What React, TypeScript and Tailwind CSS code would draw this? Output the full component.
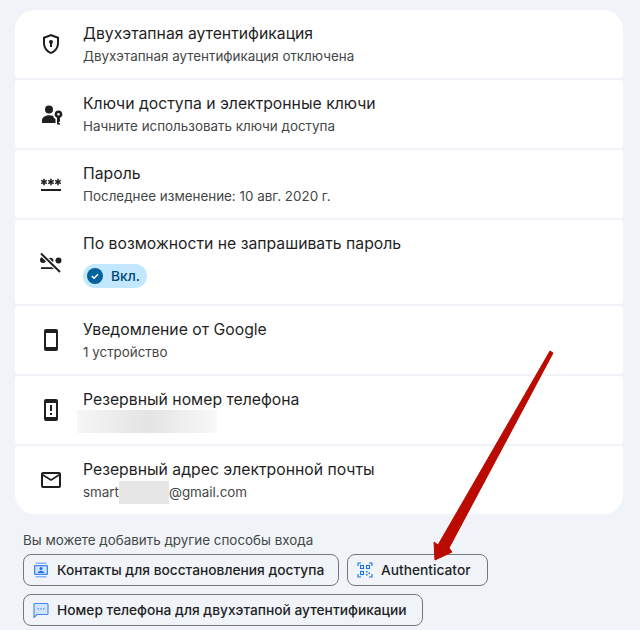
import React from 'react';

const font = "font-['Inter',sans-serif]";

function ShieldIcon() {
  return (
    <svg viewBox="0 0 24 24" className="h-6 w-6" fill="#1f1f1f">
      <path d="M12 2 4 5v6.100c0 5 3.400 9.700 8 10.900 4.600-1.200 8-5.900 8-10.900V5l-8-3Zm6 9.100c0 4-2.500 7.700-6 8.800-3.500-1.100-6-4.800-6-8.800V6.400l6-2.250 6 2.250v4.700Z" />
      <path d="M12 8a2 2 0 0 0-1 3.730V15h2v-3.270A2 2 0 0 0 12 8Z" />
    </svg>
  );
}

function PersonKeyIcon() {
  return (
    <svg viewBox="0 0 24 24" className="h-6 w-6" fill="#1f1f1f">
      <circle cx="10" cy="7.500" r="4" />
      <path d="M3 21v-3c0-2.800 4-4.800 7.500-4.800 1.300 0 2.500.2 3.600.6.300 1.400 1.200 2.600 2.400 3.300V21H3Z" />
      <path fillRule="evenodd" d="M19.500 8.500a3.800 3.800 0 0 0-1.500 7.300V22.500h3v-1.600h-1.200v-1.100H21v-4a3.800 3.800 0 0 0-1.500-7.300Zm0 2.500a1.300 1.300 0 1 1 0 2.600 1.300 1.300 0 0 1 0-2.600Z" />
    </svg>
  );
}

function Star({ x }: { x: number }) {
  return (
    <g transform={`translate(${x} 10)`} stroke="#1f1f1f" strokeWidth="1.500">
      <path d="M0-3.200V3.200M-2.800-1.600 2.800 1.600M-2.800 1.600 2.800-1.600" />
    </g>
  );
}

function PasswordIcon() {
  return (
    <svg viewBox="0 0 24 24" className="h-6 w-6" fill="#1f1f1f">
      <rect x="2" y="17" width="20" height="2" />
      <Star x={5} />
      <Star x={12} />
      <Star x={19} />
    </svg>
  );
}

function NoPasswordIcon() {
  return (
    <svg viewBox="0 0 24 24" className="h-6 w-6" fill="#1f1f1f">
      <circle cx="4" cy="10" r="3" />
      <circle cx="11.500" cy="10.500" r="2.800" />
      <circle cx="19.500" cy="10.500" r="3" />
      <rect x="2" y="17.200" width="15" height="1.800" />
      <path d="M2 3.500 21 22" stroke="#fff" strokeWidth="4.500" />
      <path d="M2 3.500 21 22" stroke="#1f1f1f" strokeWidth="2" />
    </svg>
  );
}

function PhoneIcon({ alert }: { alert?: boolean }) {
  return (
    <svg viewBox="0 0 24 24" className="h-6 w-6" fill="#1f1f1f">
      <path d="M7 1h10a2 2 0 0 1 2 2v18a2 2 0 0 1-2 2H7a2 2 0 0 1-2-2V3a2 2 0 0 1 2-2Zm0 4v14h10V5H7Z" />
      {alert && <path d="M11 7h2v6h-2zM11 15h2v2h-2z" />}
    </svg>
  );
}

function MailIcon() {
  return (
    <svg viewBox="0 0 24 24" className="h-6 w-6" fill="#1f1f1f">
      <path d="M4 4h16a2 2 0 0 1 2 2v12a2 2 0 0 1-2 2H4a2 2 0 0 1-2-2V6a2 2 0 0 1 2-2Zm16 4-8 5-8-5v10h16V8Zm0-2H4l8 5 8-5Z" />
    </svg>
  );
}

function ContactsIcon() {
  return (
    <svg viewBox="0 0 16 16" className="h-4 w-4">
      <rect x="2.500" y="0.500" width="11" height="1.500" fill="#8ab4f8" />
      <rect x="2.500" y="14" width="11" height="1.500" fill="#8ab4f8" />
      <rect x="1" y="3" width="14" height="10" rx="1" fill="#4285f4" />
      <rect x="2.300" y="4.300" width="11.400" height="7.400" fill="#d2e3fc" />
      <circle cx="8" cy="6.600" r="1.500" fill="#1a73e8" />
      <path d="M4.800 11c.3-1.500 1.700-2.200 3.200-2.200s2.900.7 3.200 2.200z" fill="#1a73e8" />
    </svg>
  );
}

function MessageIcon() {
  return (
    <svg viewBox="0 0 16 16" className="h-4 w-4">
      <path d="M2 1.500h12a1 1 0 0 1 1 1v9a1 1 0 0 1-1 1H4l-3 3v-13a1 1 0 0 1 1-1Z" fill="#d2e3fc" stroke="#4285f4" strokeWidth="1.100" />
      <path d="M4.500 6.300h1.300v1.300H4.500zM7.300 6.300h1.300v1.300H7.300zM10.200 6.300h1.300v1.300h-1.300z" fill="#4285f4" />
    </svg>
  );
}

function QrIcon() {
  return (
    <svg viewBox="0 0 16 16" className="h-4 w-4" fill="none" stroke="#1a73e8" strokeWidth="1.100">
      <path d="M1 4V1h3M12 1h3v3M1 12v3h3M12 15h3v-3" />
      <rect x="3.500" y="3.500" width="3" height="3" />
      <rect x="9.500" y="3.500" width="3" height="3" />
      <rect x="3.500" y="9.500" width="3" height="3" />
      <path d="M9 9h1.500v1.500H9zM11.500 10.500H13V12h-1.500zM9 12h1.500v1.500H9z" fill="#1a73e8" stroke="none" />
    </svg>
  );
}

function Row({
  icon,
  title,
  sub,
  first,
  last,
}: {
  icon: React.ReactNode;
  title: string;
  sub: React.ReactNode;
  first?: boolean;
  last?: boolean;
}) {
  return (
    <div
      className={`flex h-[68px] items-center bg-white pl-6 ${
        first ? 'rounded-t-[20px] rounded-b-[4px]' : last ? 'rounded-b-[20px] rounded-t-[4px]' : 'rounded-[4px]'
      }`}
    >
      <div className="flex w-11 shrink-0 items-center">{icon}</div>
      <div className="flex flex-col">
        <div className="text-[15.75px] leading-6 text-[#1f1f1f]">{title}</div>
        <div className="h-5 text-[13.4px] leading-5 text-[#444746]">{sub}</div>
      </div>
    </div>
  );
}

function Chip({ icon, label, className }: { icon: React.ReactNode; label: string; className: string }) {
  return (
    <div className={`flex h-8 items-center gap-2 rounded-lg border border-[#747775] pl-[9px] text-[13.75px] font-medium text-[#1f1f1f] ${className}`}>
      {icon}
      <span>{label}</span>
    </div>
  );
}

export default function App() {
  return (
    <div className={`relative h-[630px] w-[640px] overflow-hidden bg-[#f0f4f9] pl-[15px] pr-[17px] pt-[10px] ${font}`}>
      <div className="flex flex-col gap-[2px]">
        <Row first icon={<ShieldIcon />} title="Двухэтапная аутентификация" sub="Двухэтапная аутентификация отключена" />
        <Row icon={<PersonKeyIcon />} title="Ключи доступа и электронные ключи" sub="Начните использовать ключи доступа" />
        <Row icon={<PasswordIcon />} title="Пароль" sub="Последнее изменение: 10 авг. 2020 г." />
        <div className="flex h-[84px] items-center rounded-[4px] bg-white pb-1 pl-6">
          <div className="mt-1 flex w-11 shrink-0 items-center">
            <NoPasswordIcon />
          </div>
          <div className="flex flex-col">
            <div className="text-[15.75px] leading-6 text-[#1f1f1f]">По возможности не запрашивать пароль</div>
            <div className="mt-2 flex h-6 w-16 items-center gap-2 rounded-full bg-[#c2e7ff] pl-1 text-[13.75px] font-medium text-[#004a77]">
              <span className="flex h-4 w-4 items-center justify-center rounded-full bg-[#00639b]">
                <svg viewBox="0 0 16 16" className="h-4 w-4" fill="none" stroke="#fff" strokeWidth="1.600">
                  <path d="m4.800 8 2.200 2.200 4-4" />
                </svg>
              </span>
              Вкл.
            </div>
          </div>
        </div>
        <Row icon={<PhoneIcon />} title="Уведомление от Google" sub="1 устройство" />
        <Row
          icon={<PhoneIcon alert />}
          title="Резервный номер телефона"
          sub={<div className="-ml-[6px] -mt-[2px] h-[23px] w-[140px] bg-gradient-to-r from-[#f6f6f6] via-[#e4e4e4] to-[#f8f8f8]" />}
        />
        <Row
          last
          icon={<MailIcon />}
          title="Резервный адрес электронной почты"
          sub={
            <span className="flex items-center">
              smart
              <span className="-my-[2px] h-[23px] w-[50px] bg-[#e6e6e6]" />
              @gmail.com
            </span>
          }
        />
      </div>

      <div className="mt-4 px-2 text-[13.4px] leading-5 text-[#444746]">Вы можете добавить другие способы входа</div>
      <div className="mt-1 flex flex-wrap gap-2 px-2">
        <Chip icon={<ContactsIcon />} label="Контакты для восстановления доступа" className="w-[316px]" />
        <Chip icon={<QrIcon />} label="Authenticator" className="w-[141px]" />
        <Chip icon={<MessageIcon />} label="Номер телефона для двухэтапной аутентификации" className="w-[400px]" />
      </div>

      {/* red annotation arrow */}
      <svg className="pointer-events-none absolute left-0 top-0 h-[630px] w-[640px]" viewBox="0 0 640 630">
        <path d="M550 351 553 353 449 548 452 552 435 560 434 542 438 545Z" fill="#bb0a00" stroke="#bb0a00" strokeLinejoin="round" />
      </svg>
    </div>
  );
}
